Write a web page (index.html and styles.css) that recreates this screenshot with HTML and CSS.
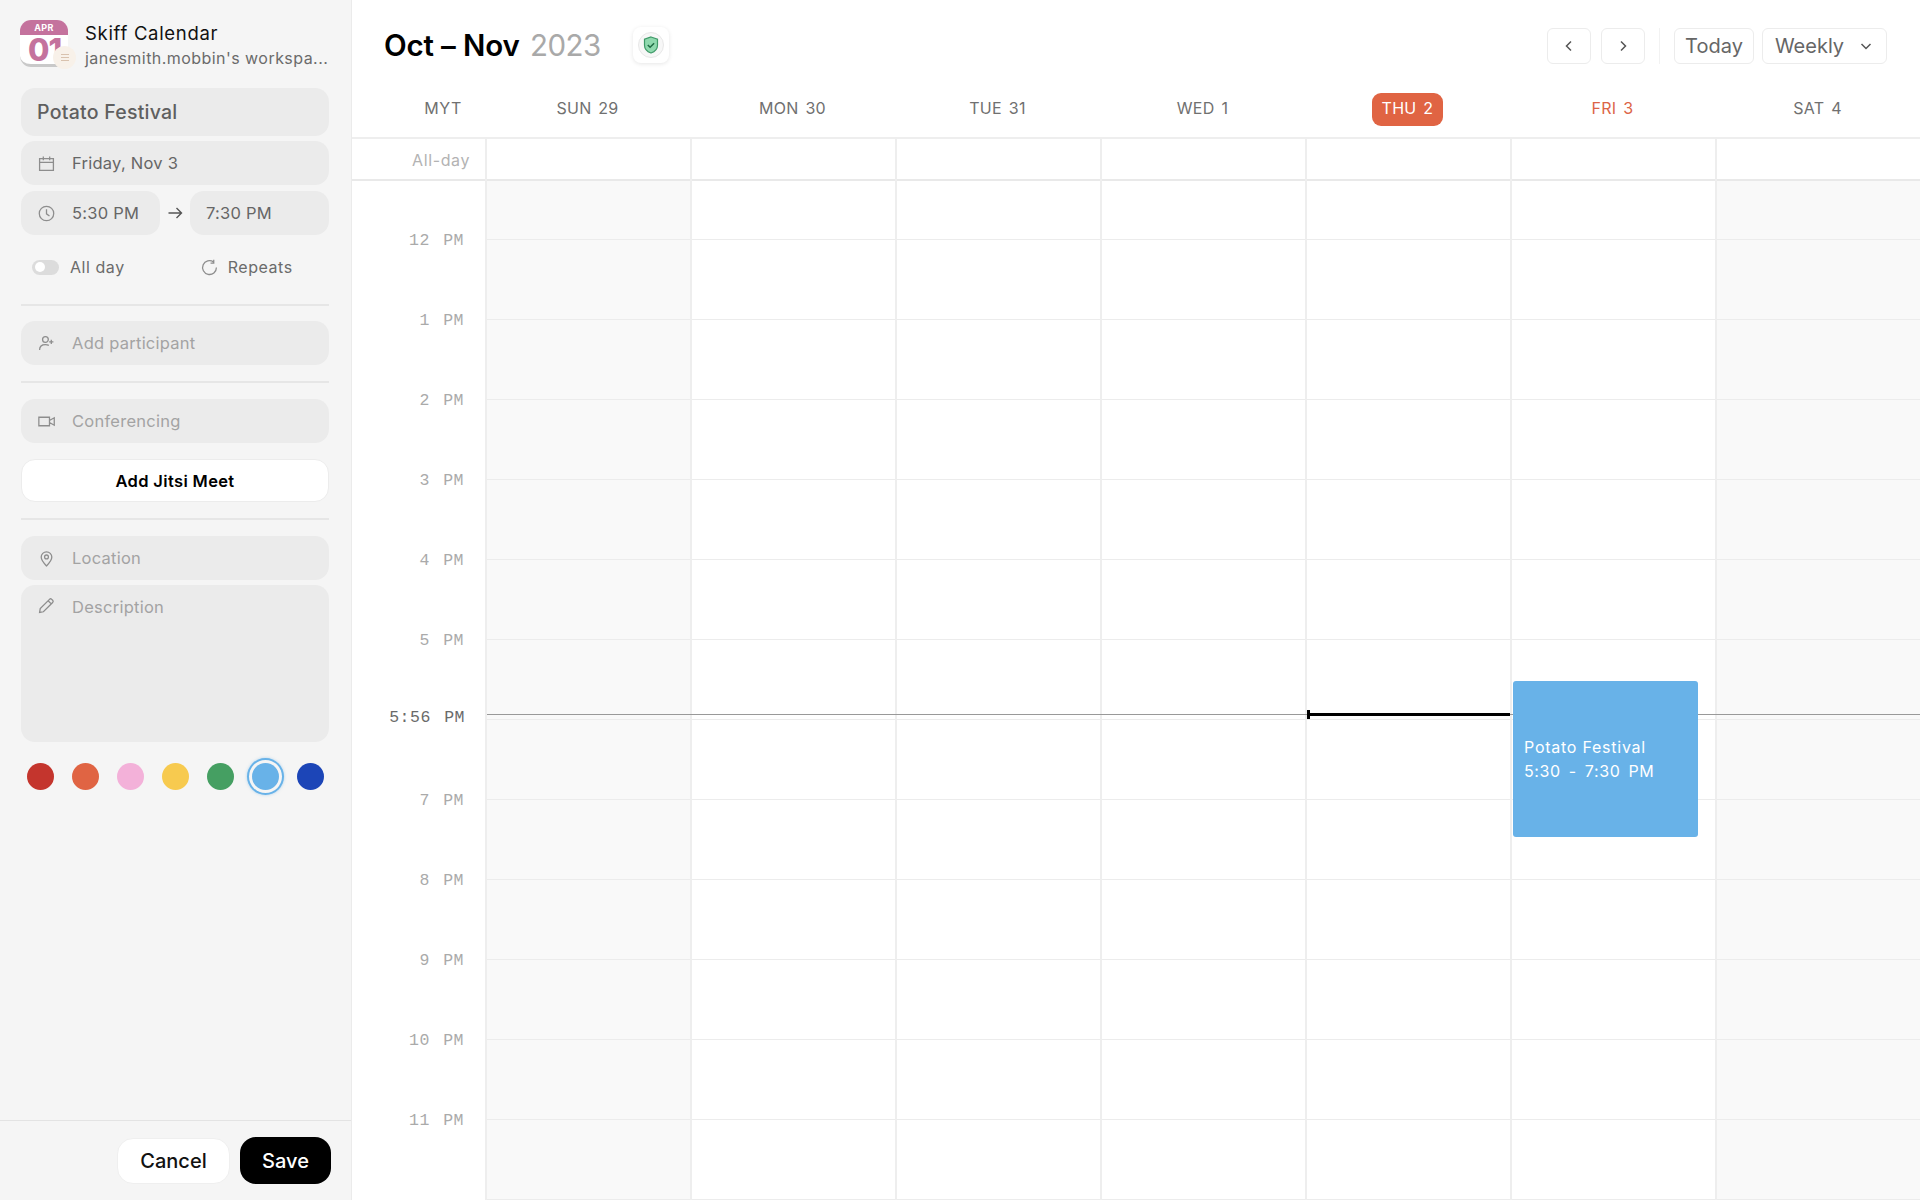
FILE: index.html
```html
<!DOCTYPE html>
<html lang="en">
<head>
<meta charset="utf-8">
<title>Skiff Calendar</title>
<link rel="stylesheet" href="styles.css">
</head>
<body>
<div class="app">
  <aside class="sidebar">
    <div class="brand">
      <div class="logo">
        <div class="logo-top">APR</div>
        <div class="logo-date">01</div>
        <div class="logo-badge"><span></span><span></span><span></span></div>
      </div>
      <div class="brand-text">
        <div class="brand-name">Skiff Calendar</div>
        <div class="brand-sub">janesmith.mobbin's workspa...</div>
      </div>
    </div>
    <div class="field field-title">Potato Festival</div>
    <div class="field field-row">
      <svg class="icon" viewBox="0 0 16 16"><path d="M1.500 3.500h13v11h-13zM1.500 7h13M5 1.500v3.500M11 1.500v3.500"/></svg>
      <span>Friday, Nov 3</span>
    </div>
    <div class="time-row">
      <div class="field field-row time-field">
        <svg class="icon" viewBox="0 0 16 16"><circle cx="8" cy="8" r="6.800"/><path d="M8 4v4.300l2.800 2"/></svg>
        <span>5:30 PM</span>
      </div>
      <svg class="arrow" viewBox="0 0 16 16"><path d="M1.500 8h13M9.500 3l5 5-5 5"/></svg>
      <div class="field field-row time-field time-end"><span>7:30 PM</span></div>
    </div>
    <div class="options">
      <div class="option">
        <span class="toggle"><span class="knob"></span></span>
        <span>All day</span>
      </div>
      <div class="option option-repeat">
        <svg class="icon" viewBox="0 0 16 16"><path d="M14.500 8A6.500 6.500 0 1 1 11.800 2.800M12 .8v3h-3"/></svg>
        <span>Repeats</span>
      </div>
    </div>
    <div class="divider divider-a"></div>
    <div class="field field-row placeholder">
      <svg class="icon" viewBox="0 0 16 16"><circle cx="7" cy="4.200" r="2.700"/><path d="M1.500 14c0-3.300 2.300-5 5.500-5 1.200 0 2.300.3 3.200.8M12.500 4.500v4M10.500 6.500h4"/></svg>
      <span>Add participant</span>
    </div>
    <div class="divider divider-b"></div>
    <div class="field field-row placeholder">
      <svg class="icon" viewBox="0 0 16 16"><path d="M.8 4h10v8h-10zM10.800 7l4.500-2.500v7l-4.500-2.500"/></svg>
      <span>Conferencing</span>
    </div>
    <button class="jitsi">Add Jitsi Meet</button>
    <div class="divider divider-c"></div>
    <div class="field field-row placeholder">
      <svg class="icon" viewBox="0 0 16 16"><path d="M8 15c-3-3-5-5.400-5-8.300a5 5 0 0 1 10 0C13 9.600 11 12 8 15z"/><circle cx="8" cy="6.500" r="1.800"/></svg>
      <span>Location</span>
    </div>
    <div class="field description placeholder">
      <svg class="icon" viewBox="0 0 16 16"><path d="M1.500 14.500l.6-3.600L10.800 2.200a1.500 1.500 0 0 1 2.100 0l.9.9a1.500 1.500 0 0 1 0 2.100L5.100 13.900zM9.500 3.500l3 3"/></svg>
      <span>Description</span>
    </div>
    <div class="swatches">
      <span class="swatch red"></span>
      <span class="swatch orange"></span>
      <span class="swatch pink"></span>
      <span class="swatch yellow"></span>
      <span class="swatch green"></span>
      <span class="swatch sky selected"></span>
      <span class="swatch blue"></span>
    </div>
    <div class="footer">
      <button class="btn-cancel">Cancel</button>
      <button class="btn-save">Save</button>
    </div>
  </aside>
  <main class="main">
    <header class="topbar">
      <h1 class="heading"><strong>Oct – Nov</strong> <span>2023</span></h1>
      <div class="shield">
        <svg viewBox="0 0 28 28" width="28" height="28">
          <circle cx="14" cy="14" r="12.500" fill="#f7f7f7" stroke="#e8e8e8"/>
          <path d="M14 6l6.500 2.200v6c0 4-3 6.500-6.500 7.800-3.500-1.300-6.500-3.800-6.500-7.800v-6z" fill="#8fd9ae" stroke="#3f9a68" stroke-width="1.200"/>
          <path d="M10.800 14l2.300 2.300 4-4" fill="none" stroke="#1f6b43" stroke-width="1.500"/>
        </svg>
      </div>
      <div class="controls">
        <button class="ctl ctl-icon"><svg viewBox="0 0 16 16"><path d="M10 3.500L5.500 8l4.500 4.500"/></svg></button>
        <button class="ctl ctl-icon ctl-next"><svg viewBox="0 0 16 16"><path d="M6 3.500L10.500 8 6 12.500"/></svg></button>
        <span class="ctl-sep"></span>
        <button class="ctl ctl-today">Today</button>
        <button class="ctl ctl-weekly">Weekly <svg viewBox="0 0 16 16"><path d="M3.500 6L8 10.500 12.500 6"/></svg></button>
      </div>
    </header>
    <div class="dayhead">
      <div class="gutter-label">MYT</div>
      <div class="dayname">SUN 29</div>
      <div class="dayname">MON 30</div>
      <div class="dayname">TUE 31</div>
      <div class="dayname">WED 1</div>
      <div class="dayname"><span class="today-pill">THU 2</span></div>
      <div class="dayname selected-day">FRI 3</div>
      <div class="dayname">SAT 4</div>
    </div>
    <div class="allday">
      <div class="allday-label">All-day</div>
      <div class="allday-cell"></div>
      <div class="allday-cell"></div>
      <div class="allday-cell"></div>
      <div class="allday-cell"></div>
      <div class="allday-cell"></div>
      <div class="allday-cell"></div>
      <div class="allday-cell"></div>
    </div>
    <div class="grid">
      <div class="hours">
        <div class="hour">12 PM</div>
        <div class="hour">1 PM</div>
        <div class="hour">2 PM</div>
        <div class="hour">3 PM</div>
        <div class="hour">4 PM</div>
        <div class="hour">5 PM</div>
        <div class="hour hour-now">5:56 PM</div>
        <div class="hour">7 PM</div>
        <div class="hour">8 PM</div>
        <div class="hour">9 PM</div>
        <div class="hour">10 PM</div>
        <div class="hour">11 PM</div>
      </div>
      <div class="day weekend"></div>
      <div class="day"></div>
      <div class="day"></div>
      <div class="day"></div>
      <div class="day"></div>
      <div class="day"></div>
      <div class="day weekend"></div>
      <div class="now-line"></div>
      <div class="now-today"></div>
      <div class="event">
        <div class="event-name">Potato Festival</div>
        <div class="event-time">5:30 - 7:30 PM</div>
      </div>
    </div>
  </main>
</div>
</body>
</html>
```
FILE: styles.css
```css
* { box-sizing: border-box; }
html, body { margin: 0; height: 100%; }
body { font-family: Inter, "Liberation Sans", sans-serif; background: #fff; color: #000; overflow: hidden; }
button { font-family: inherit; cursor: pointer; }

.app { display: flex; height: 1200px; }

/* Sidebar */
.sidebar { width: 352px; flex: none; background: #f5f5f5; border-right: 1px solid #ebebeb; display: flex; flex-direction: column; padding: 20px 22px 0 21px; position: relative; }
.brand { display: flex; gap: 17px; height: 48px; margin-bottom: 20px; margin-left: -1px; }
.logo { width: 48px; height: 47px; position: relative; flex: none; background: #fff; border-radius: 11px; border-bottom: 3px solid #c9c9c9; }
.logo-top { height: 15px; background: #c4729d; border-radius: 11px 11px 0 0; color: #fff; font-size: 9px; font-weight: 700; line-height: 15px; text-align: center; letter-spacing: .3px; }
.logo-date { color: #c4729d; font-size: 31px; font-weight: 800; line-height: 29px; padding-left: 8px; letter-spacing: -1px; }
.logo-badge { position: absolute; left: 33px; top: 26px; width: 23px; height: 23px; border-radius: 50%; background: #f8f1e9; display: flex; flex-direction: column; align-items: center; justify-content: center; gap: 2px; }
.logo-badge span { display: block; width: 8px; height: 1px; background: #d9c2ae; }
.brand-text { min-width: 0; flex: 1; padding-top: 1px; }
.brand-name { font-size: 18.500px; line-height: 25px; color: #111; letter-spacing: .7px; }
.brand-sub { font-size: 16px; line-height: 24px; color: #6b6b6b; white-space: nowrap; letter-spacing: .45px; }

.field { background: #ebebeb; border-radius: 14px; color: #666; }
.field-title { height: 48px; font-size: 19.500px; font-weight: 500; line-height: 48px; padding-left: 16px; color: #5f5f5f; margin-bottom: 5px; letter-spacing: .25px; }
.field-row { height: 44px; display: flex; align-items: center; gap: 17px; padding-left: 17px; font-size: 16.500px; margin-bottom: 6px; letter-spacing: .25px; }
.icon { width: 17px; height: 17px; flex: none; fill: none; stroke: #8d8d8d; stroke-width: 1.200; }
.time-row { display: flex; align-items: center; height: 44px; margin-bottom: 0; }
.time-field { width: 139px; margin-bottom: 0; flex: none; }
.time-end { padding-left: 16px; }
.arrow { width: 16px; height: 16px; margin: 0 7px; fill: none; stroke: #555; stroke-width: 1.400; flex: none; }
.options { display: flex; align-items: center; height: 64px; padding-left: 11px; color: #6b6b6b; font-size: 16px; letter-spacing: .55px; }
.option { display: flex; align-items: center; gap: 11px; }
.option-repeat { margin-left: 76px; gap: 10px; }
.toggle { width: 27px; height: 15px; border-radius: 8px; background: #dcdcdc; position: relative; display: block; }
.knob { position: absolute; left: 3px; top: 2.500px; width: 10px; height: 10px; border-radius: 50%; background: #fff; }
.divider { height: 2px; background: #e6e6e6; }
.divider-a { margin: 5px 0 15px; }
.divider-b { margin: 10px 0 16px; }
.divider-c { margin: 16px 0 16px; }
.placeholder { color: #a3a3a3; }
.jitsi { height: 43px; width: 100%; background: #fff; border: 1px solid #ececec; border-radius: 14px; font-size: 16.500px; font-weight: 600; letter-spacing: .35px; color: #000; margin-top: 10px; padding: 0; }
.description { height: 157px; display: flex; align-items: flex-start; gap: 17px; padding: 12px 0 0 17px; font-size: 16.500px; letter-spacing: .25px; line-height: 20px; margin-top: -1px; }
.swatches { display: flex; justify-content: space-between; padding: 0 5px 0 6px; margin-top: 21px; align-items: center; height: 27px; }
.swatch { width: 27px; height: 27px; border-radius: 50%; display: block; }
.red { background: #c4352d; }
.orange { background: #e06443; }
.pink { background: #f3b1d9; }
.yellow { background: #f7ca4f; }
.green { background: #459f62; }
.sky { background: #68b2e8; }
.blue { background: #1c45b7; }
.selected { box-shadow: 0 0 0 3px #f5f5f5, 0 0 0 5px #68b2e8, 0 0 3px 5px rgba(104,178,232,.5); }
.footer { position: absolute; left: 0; right: 0; bottom: 0; height: 80px; border-top: 1px solid #e3e3e3; display: flex; align-items: center; justify-content: flex-end; gap: 10px; padding: 0 20px 0 0; }
.btn-cancel { width: 113px; height: 46px; border-radius: 16px; background: #fff; border: 1px solid #efefef; font-size: 20px; font-weight: 500; color: #111; padding: 0; }
.btn-save { width: 91px; height: 47px; border-radius: 16px; background: #000; border: 0; font-size: 20px; font-weight: 500; color: #fff; padding: 0; }

/* Main */
.main { flex: 1; min-width: 0; display: flex; flex-direction: column; }
.topbar { height: 90px; display: flex; align-items: center; padding: 0 33px 0 32px; flex: none; }
.heading { margin: 0; font-size: 29.500px; font-weight: 400; }
.heading strong { font-weight: 600; letter-spacing: -.15px; }
.heading span { color: #a9a9a9; margin-left: 2px; letter-spacing: -.5px; }
.shield { width: 36px; height: 36px; margin-left: 32px; background: #fff; border-radius: 8px; box-shadow: 0 1px 4px rgba(0,0,0,.1); display: flex; align-items: center; justify-content: center; }
.controls { margin-left: auto; display: flex; align-items: center; gap: 8px; padding-top: 2px; }
.ctl { height: 36px; background: #fff; border: 1px solid #ececec; border-radius: 6px; color: #666; font-size: 20px; display: flex; align-items: center; justify-content: center; padding: 0; }
.ctl svg { width: 16px; height: 16px; fill: none; stroke: #555; stroke-width: 1.500; }
.ctl-icon { width: 44px; }
.ctl-next { margin-left: 2px; }
.ctl-sep { width: 1px; height: 36px; background: #f2f2f2; margin: 0 6px; }
.ctl-today { width: 80px; }
.ctl-weekly { width: 125px; gap: 14px; }

.dayhead, .allday, .grid { display: grid; grid-template-columns: 133px repeat(7, 205px); }
.dayhead { height: 49px; border-bottom: 2px solid #eee; align-items: center; font-size: 16px; color: #707070; padding-bottom: 11px; flex: none; word-spacing: 2px; letter-spacing: .3px; }
.gutter-label { text-align: right; padding-right: 23px; letter-spacing: .6px; }
.dayname { text-align: center; height: 24px; line-height: 24px; }
.today-pill { display: block; width: 71px; margin: -4px auto 0; position: relative; top: 1px; background: #e06443; color: #fff; border-radius: 9px; height: 33px; line-height: 31px; }
.selected-day { color: #dc6446; }
.allday { height: 42px; border-bottom: 2px solid #e9e9e9; flex: none; }
.allday-label { text-align: right; padding-right: 15px; font-size: 16px; line-height: 42px; color: #b3b3b3; letter-spacing: .6px; }
.allday-cell { border-left: 2px solid #eee; }

.grid { flex: 1; position: relative; overflow: hidden; }
.hours { padding-top: 50px; }
.hour { height: 80px; line-height: 20px; text-align: right; padding-right: 21px; font-family: "Liberation Mono", monospace; font-size: 16.500px; color: #aaa; word-spacing: 3px; letter-spacing: .5px; }
.hour-now { color: #6a6a6a; position: relative; top: -3px; padding-right: 20px; }
.day { border-left: 2px solid #eee; background-image: linear-gradient(to bottom, #ececec 1px, transparent 1px); background-size: 100% 80px; background-position: 0 58px; }
.weekend { background-color: #f9f9f9; }
.now-line { position: absolute; left: 135px; right: 0; top: 533px; height: 1px; background: #999; }
.now-today { position: absolute; left: 955px; top: 532px; width: 203px; height: 3px; background: #000; }
.now-today::before { content: ""; position: absolute; left: 0; top: -3px; width: 3px; height: 9px; background: #000; }
.event { position: absolute; left: 1161px; top: 500px; width: 185px; height: 156px; background: #68b2e8; border-radius: 3px; color: #fff; padding: 54px 0 0 11px; font-size: 16px; line-height: 24px; }
.event-name { letter-spacing: .75px; }
.event-time { word-spacing: 3px; letter-spacing: .6px; }
```
